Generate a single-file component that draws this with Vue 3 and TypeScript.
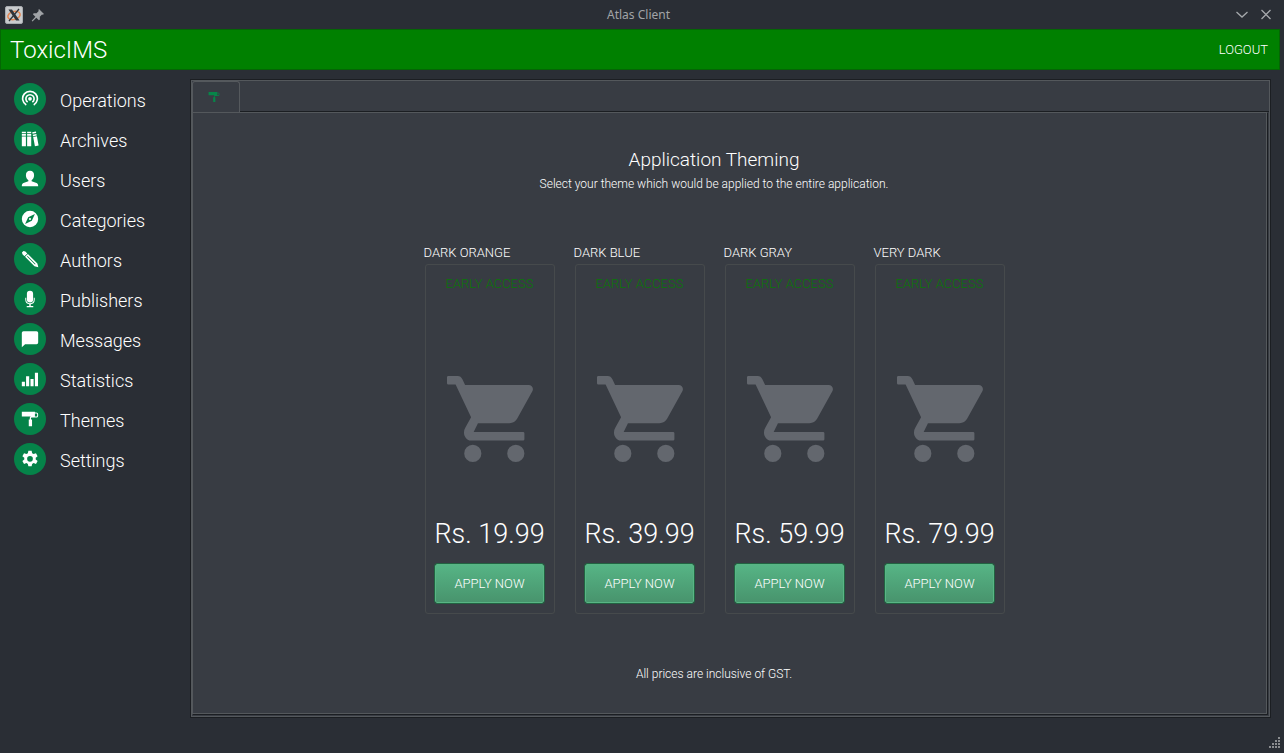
<script setup lang="ts">
import { ref } from 'vue'

interface MenuItem {
  label: string
  icon: string
}

interface Theme {
  name: string
  price: string
}

const roller = 'M1 2h16v1h1.500c1.800 0 2.500.9 2.500 3s-.7 3.200-2.500 3.200h-5.500c-.6 0-.8.2-.8.8v1.500h1.300V20h-4v-8.500h1.200V10c0-1.300.7-2 2-2h5.800c.9 0 1.300-.5 1.300-2s-.4-1.800-1.300-1.800H17V8H1z'

const menu: MenuItem[] = [
  { label: 'Operations', icon: 'M6 19.200A10 10 0 1 1 16 19.200L15.100 17.500A8 8 0 1 0 6.900 17.500zM7.600 15.700A6 6 0 1 1 14.400 15.700L13.300 14A4 4 0 1 0 8.700 14zM11 8.500a2.300 2.300 0 1 0 0 4.600 2.300 2.300 0 0 0 0-4.600z' },
  { label: 'Archives', icon: 'M1 2h5v2H1zm0 3h5v2H1zm0 3h5v12H1zM7.500 2h5v2h-5zm0 3h5v2h-5zm0 3h5v12h-5zM13.700 2.700l4.500-.9.400 2-4.500.9zm.6 3l4.500-.9.400 1.800-4.500.9zm.6 2.800l4.500-.9L21.500 19l-4.500 1z' },
  { label: 'Users', icon: 'M11 1c3.300 0 5 2.200 5 5.400 0 2.600-1.200 4.800-3 6v1.300l6 2.300c1.500.600 2 1.800 2 4H1c0-2.200.500-3.400 2-4l6-2.300v-1.300c-1.800-1.200-3-3.400-3-6C6 3.200 7.700 1 11 1z' },
  { label: 'Categories', icon: 'M11 1a10 10 0 1 0 0 20 10 10 0 0 0 0-20zm6 4-3.800 8.200L5 17l3.800-8.200zM11 9.700a1.300 1.300 0 1 0 0 2.600 1.300 1.300 0 0 0 0-2.600z' },
  { label: 'Authors', icon: 'M1.200 3 3 1.200l2.300.6L7.700 4.200 4.200 7.700 1.800 5.300zM4.900 8.400l3.500-3.500L20 16.500l1.200 4.700L16.500 20zM7.300 8l9.800 9.800.7-.7L8 7.300z' },
  { label: 'Publishers', icon: 'M11 1c2.600 0 3.800 1.500 3.800 3.500V12c0 2-1.200 3.300-3.800 3.300S7.200 14 7.200 12V4.500C7.200 2.500 8.400 1 11 1zM5.200 9.500h1.200V12c0 2.800 1.700 4.300 4.600 4.300s4.600-1.500 4.600-4.300V9.500h1.200V12c0 3.200-1.900 5.200-4.900 5.500v2H15V21H7v-1.500h3.100v-2C7.100 17.200 5.200 15.200 5.200 12z' },
  { label: 'Messages', icon: 'M3 1.500h16a2 2 0 0 1 2 2v11.800a2 2 0 0 1-2 2H5L1 21V3.500a2 2 0 0 1 2-2z' },
  { label: 'Statistics', icon: 'M1 14.500h3.800V20H1zM6.200 7.500H10V20H6.200zM11.600 11h3.800v9h-3.800zM17 3.500h3.800V20H17z' },
  { label: 'Themes', icon: roller },
  { label: 'Settings', icon: 'M9 1h4l.6 3 1.800 1 2.900-1 2 3.500-2.300 2v2l2.300 2-2 3.500-2.900-1-1.800 1-.6 3H9l-.6-3-1.800-1-2.900 1-2-3.500 2.300-2v-2l-2.300-2 2-3.500 2.900 1 1.800-1zM11 7.300a3.500 3.500 0 1 0 0 7 3.500 3.500 0 0 0 0-7z' },
]

const themes: Theme[] = [
  { name: 'DARK ORANGE', price: '19.99' },
  { name: 'DARK BLUE', price: '39.99' },
  { name: 'DARK GRAY', price: '59.99' },
  { name: 'VERY DARK', price: '79.99' },
]

const active = ref('Themes')
const applied = ref('')
</script>

<template>
  <div class="window">
    <div class="titlebar">
      <div class="title-left">
        <svg width="18" height="18" viewBox="0 0 18 18" aria-hidden="true">
          <rect x=".5" y=".5" width="17" height="17" rx="1.500" fill="#c9cbcd" stroke="#a7abaf" />
          <ellipse cx="9" cy="9.500" rx="6.300" ry="4" fill="none" stroke="#e58650" stroke-width="1.500" transform="rotate(-15 9 9.500)" />
          <path d="M3.500 3.500h3.500l7.500 11h-3.500z" fill="#30343a" />
          <path d="M14 3 4 15" stroke="#30343a" stroke-width="1.300" />
        </svg>
        <svg width="14" height="14" viewBox="0 0 14 14" aria-hidden="true">
          <path d="m8 1 5 5-1.200.700-.8-.2-2.200 2.300.1 2.700-1 .8-2.600-2.600L1.500 13.500.7 12.700l3.700-3.900L1.900 6.200l.8-1 2.800.1L7.700 3 7.400 2z" fill="#a0a3a7" />
        </svg>
      </div>
      <span class="caption">Atlas Client</span>
      <div class="title-right">
        <button class="win-button" type="button" aria-label="Minimize">
          <svg width="12" height="12" viewBox="0 0 12 12"><path d="m.5 3 5.500 5 5.500-5" /></svg>
        </button>
        <button class="win-button" type="button" aria-label="Close">
          <svg width="12" height="12" viewBox="0 0 12 12"><path d="m1.500 1 9 9m0-9-9 9" /></svg>
        </button>
      </div>
    </div>

    <header class="banner">
      <h1>ToxicIMS</h1>
      <button class="logout" type="button">LOGOUT</button>
    </header>

    <div class="body">
      <nav class="menu">
        <button v-for="item in menu" :key="item.label" class="menu-item" type="button" @click="active = item.label">
          <span class="badge">
            <svg width="18" height="18" viewBox="0 0 22 22" aria-hidden="true">
              <path :d="item.icon" fill="#fff" fill-rule="evenodd" />
            </svg>
          </span>
          <span class="menu-label">{{ item.label }}</span>
        </button>
      </nav>

      <main class="panel">
        <div class="tabs" role="tablist">
          <button class="tab" type="button" role="tab" aria-selected="true" aria-label="Themes">
            <svg width="12" height="12" viewBox="0 0 22 22"><path :d="roller" fill="#078549" fill-rule="evenodd" /></svg>
          </button>
        </div>
        <section class="page">
          <h2>Application Theming</h2>
          <p class="hint">Select your theme which would be applied to the entire application.</p>
          <div class="themes">
            <article v-for="theme in themes" :key="theme.name" class="theme">
              <h3>{{ theme.name }}</h3>
              <div class="card">
                <span class="early">EARLY ACCESS</span>
                <svg class="cart" width="86" height="86" viewBox="1 2 20 20" aria-hidden="true">
                  <path d="M7 18a2 2 0 1 0 0 4 2 2 0 0 0 0-4zM1.300 2Q1 2 1 2.300v1.400q0 .3.300.3H3l3.600 7.590-1.350 2.450C4.400 15.500 5.500 17 6.500 17h12.200q.3 0 .3-.3v-1.400q0-.3-.3-.3H7.200l1-2h7.350c.75 0 1.410-.410 1.750-1.030l3.580-6.490C21.200 4.800 20.700 4.100 20 4.100H5.210l-.6-1.300Q4.200 2 3.500 2zM17 18a2 2 0 1 0 0 4 2 2 0 0 0 0-4z" fill="#63676e" />
                </svg>
                <span class="price">Rs. {{ theme.price }}</span>
                <button class="apply" type="button" @click="applied = theme.name">APPLY NOW</button>
              </div>
            </article>
          </div>
          <p class="note">All prices are inclusive of GST.</p>
        </section>
      </main>
    </div>

    <footer class="status">
      <svg width="12" height="12" viewBox="0 0 12 12" aria-hidden="true">
        <path d="M10 1h2v2h-2zM7 4h2v2H7zm3 0h2v2h-2zM4 7h2v2H4zm3 0h2v2H7zm3 0h2v2h-2zM1 10h2v2H1zm3 0h2v2H4zm3 0h2v2H7zm3 0h2v2h-2z" fill="#8b8d90" />
      </svg>
    </footer>
  </div>
</template>

<style>
body {
  margin: 0;
  background: #2a2e35;
}
</style>

<style scoped>
.window {
  display: flex;
  flex-direction: column;
  min-height: 100vh;
  box-sizing: border-box;
  background: #2a2e35;
  color: #fff;
  font-family: Roboto, "Liberation Sans", sans-serif;
  font-weight: 300;
  font-size: 13px;
}
h1, h2, h3, p {
  margin: 0;
  font-weight: 300;
}
button {
  padding: 0;
  border: 0;
  background: none;
  color: inherit;
  font: inherit;
}
.titlebar {
  display: grid;
  grid-template-columns: 1fr auto 1fr;
  align-items: center;
  height: 29px;
  padding: 0 12px 0 5px;
}
.title-left, .title-right {
  display: flex;
  align-items: center;
  gap: 8px;
}
.title-right {
  justify-content: flex-end;
  gap: 12px;
}
.caption {
  color: #a1a4a7;
  font-family: "Noto Sans", sans-serif;
  font-size: 12px;
  font-weight: 400;
}
.win-button {
  display: flex;
}
.win-button path {
  fill: none;
  stroke: #a5a8ab;
  stroke-width: 1.3;
}
.banner {
  display: flex;
  align-items: center;
  justify-content: space-between;
  box-sizing: border-box;
  height: 41px;
  margin-right: 4px;
  padding: 0 11px 0 9px;
  border: 1px solid #046604;
  background: #008000;
}
h1 {
  font-size: 24px;
}
.body {
  display: flex;
  flex: 1;
  padding: 9px 13px 0 14px;
}
.menu {
  display: flex;
  flex-direction: column;
  gap: 8px;
  width: 176px;
  flex: none;
  padding-top: 4px;
}
.menu-item {
  display: flex;
  align-items: center;
  gap: 14px;
  height: 32px;
  font-size: 18px;
}
.menu-label {
  padding-top: 2px;
}
.badge {
  display: flex;
  align-items: center;
  justify-content: center;
  width: 32px;
  height: 32px;
  border-radius: 50%;
  background: #058349;
}
.panel {
  display: flex;
  flex: 1;
  flex-direction: column;
  border: 1px solid #1b1e22;
  box-shadow: inset 0 0 0 1px #54585c;
  background: #383c43;
  padding: 1px;
}
.tabs {
  display: flex;
  height: 30px;
  border-bottom: 1px solid #1b1e22;
}
.tab {
  display: flex;
  justify-content: center;
  box-sizing: border-box;
  width: 48px;
  height: 32px;
  padding: 9px 5px 0 0;
  border: 1px solid #55595d;
  border-bottom: 0;
  border-radius: 3px 3px 0 0;
  background: #383c43;
}
.page {
  display: flex;
  flex: 1;
  flex-direction: column;
  align-items: center;
  padding: 34px 31px 0 0;
  border: 1px solid #54585c;
  box-shadow: 1px 1px #1b1e22;
  margin: 0 2px 2px 0;
}
h2 {
  font-size: 19px;
  line-height: 26px;
}
.hint, .note {
  font-size: 12px;
  line-height: 22px;
}
.themes {
  display: flex;
  gap: 19px;
  margin: 47px 0 49px;
}
.theme {
  width: 131px;
}
h3 {
  font-size: 13px;
  line-height: 22px;
}
.card {
  display: flex;
  flex-direction: column;
  align-items: center;
  box-sizing: border-box;
  height: 350px;
  margin-left: 1px;
  padding: 10px 9px;
  border: 1px solid #464a4c;
  border-radius: 3px;
}
.early {
  color: #087808;
  font-size: 13px;
  line-height: 18px;
}
.cart {
  margin-top: 83px;
}
.price {
  margin-top: 56px;
  font-size: 27px;
  line-height: 32px;
  white-space: nowrap;
}
.apply {
  box-sizing: border-box;
  width: 109px;
  height: 39px;
  margin-top: auto;
  border: 1px solid #58b584;
  border-radius: 2px;
  outline: 1px solid #226342;
  background: linear-gradient(#56b485, #48946d);
}
.status {
  display: flex;
  align-items: flex-end;
  justify-content: flex-end;
  box-sizing: border-box;
  height: 35px;
  padding: 0 4px 5px;
}
</style>
